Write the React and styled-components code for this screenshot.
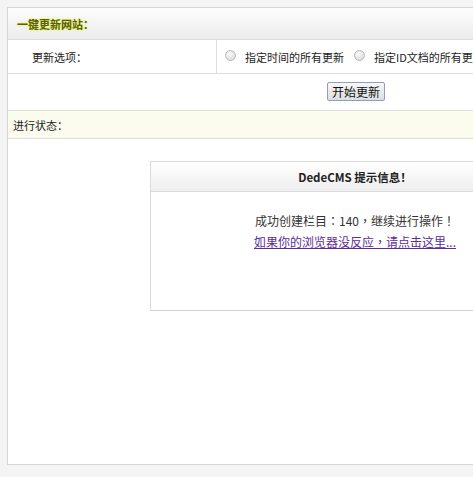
import styled, { createGlobalStyle } from "styled-components";

const GlobalStyle = createGlobalStyle`
  html, body {
    margin: 0;
    padding: 0;
    background: #f4f4f4;
    overflow: hidden;
  }
  body {
    font-family: "Noto Sans CJK SC", "DejaVu Sans", sans-serif;
    font-size: 11px;
    color: #222;
  }
`;

const Page = styled.div`
  padding: 7px 0 0 7px;
  height: 477px;
  box-sizing: border-box;
`;

const Panel = styled.div`
  width: 698px;
  height: 458px;
  box-sizing: border-box;
  border: 1px solid #d6d6d6;
  background: #fff;
  display: flex;
  flex-direction: column;
`;

const PanelHeader = styled.div`
  height: 31px;
  display: flex;
  align-items: center;
  padding-left: 9px;
  background: linear-gradient(#fdfdfd, #ececec);
  border-bottom: 1px solid #dcdcdc;
`;

const Title = styled.span`
  font-weight: bold;
  color: #56600f;
  text-shadow: 0 0 3px #e6ef4a, 0 0 2px #f0f57a;
`;

const Row = styled.div`
  display: flex;
  align-items: center;
  height: ${(p) => p.$h}px;
  border-bottom: 1px solid #dedede;
  background: ${(p) => p.$bg || "#fff"};
  justify-content: ${(p) => (p.$center ? "center" : "flex-start")};
  padding-left: ${(p) => p.$pl || 0}px;
  box-sizing: border-box;
`;

const LabelCell = styled.div`
  width: 208px;
  height: 100%;
  display: flex;
  align-items: center;
  padding-left: 24px;
  box-sizing: border-box;
`;

const OptionCell = styled.div`
  flex: 1;
  height: 100%;
  display: flex;
  align-items: center;
  border-left: 1px solid #dedede;
  padding-left: 8px;
  white-space: nowrap;
  gap: 5px;
`;

const Option = styled.label`
  display: flex;
  align-items: center;
  gap: 9px;
  margin-right: 5px;
`;

const Radio = styled.input.attrs({ type: "radio", name: "mode" })`
  appearance: none;
  margin: 0 0 3px 0;
  width: 11px;
  height: 11px;
  border-radius: 50%;
  border: 1px solid #b9b9b9;
  background: radial-gradient(circle at 40% 35%, #fafafa, #d4d4d4);
`;

const Button = styled.button`
  font-family: inherit;
  font-size: 12px;
  height: 19px;
  padding: 0 4px;
  margin-top: -2px;
  border: 1px solid #8f9bc8;
  border-radius: 2px;
  background: linear-gradient(#f7f7f7, #dedede);
  color: #111;
  line-height: 17px;
`;

const Content = styled.div`
  flex: 1;
  padding: 22px 0 0 142px;
`;

const MsgBox = styled.div`
  width: 410px;
  height: 150px;
  box-sizing: border-box;
  border: 1px solid #dadada;
  border-bottom-color: #d0d0d0;
  background: #fff;
`;

const MsgHeader = styled.div`
  height: 29px;
  display: flex;
  align-items: center;
  justify-content: center;
  font-size: 11.5px;
  font-weight: bold;
  color: #222;
  background: linear-gradient(#ffffff, #eeeeee);
  border-bottom: 1px solid #dcdcdc;
`;

const MsgBody = styled.div`
  padding-top: 18px;
  text-align: center;
  font-family: "Noto Sans CJK TC", "Noto Sans CJK SC", sans-serif;
  font-size: 12px;
  line-height: 21px;
  color: #333;
`;

const Link = styled.a`
  color: #5b2d97;
  text-decoration: underline;
`;

export default function App() {
  return (
    <>
      <GlobalStyle />
      <Page>
        <Panel>
          <PanelHeader>
            <Title>一键更新网站：</Title>
          </PanelHeader>
          <Row $h={34}>
            <LabelCell>更新选项：</LabelCell>
            <OptionCell>
              <Option>
                <Radio />
                指定时间的所有更新
              </Option>
              <Option>
                <Radio />
                指定ID文档的所有更新
              </Option>
            </OptionCell>
          </Row>
          <Row $h={37} $center>
            <Button>开始更新</Button>
          </Row>
          <Row $h={28} $bg="#fbfbee" $pl={5}>
            进行状态：
          </Row>
          <Content>
            <MsgBox>
              <MsgHeader>DedeCMS 提示信息！</MsgHeader>
              <MsgBody>
                成功创建栏目：140，继续进行操作！
                <br />
                <Link href="#">如果你的浏览器没反应，请点击这里...</Link>
              </MsgBody>
            </MsgBox>
          </Content>
        </Panel>
      </Page>
    </>
  );
}
